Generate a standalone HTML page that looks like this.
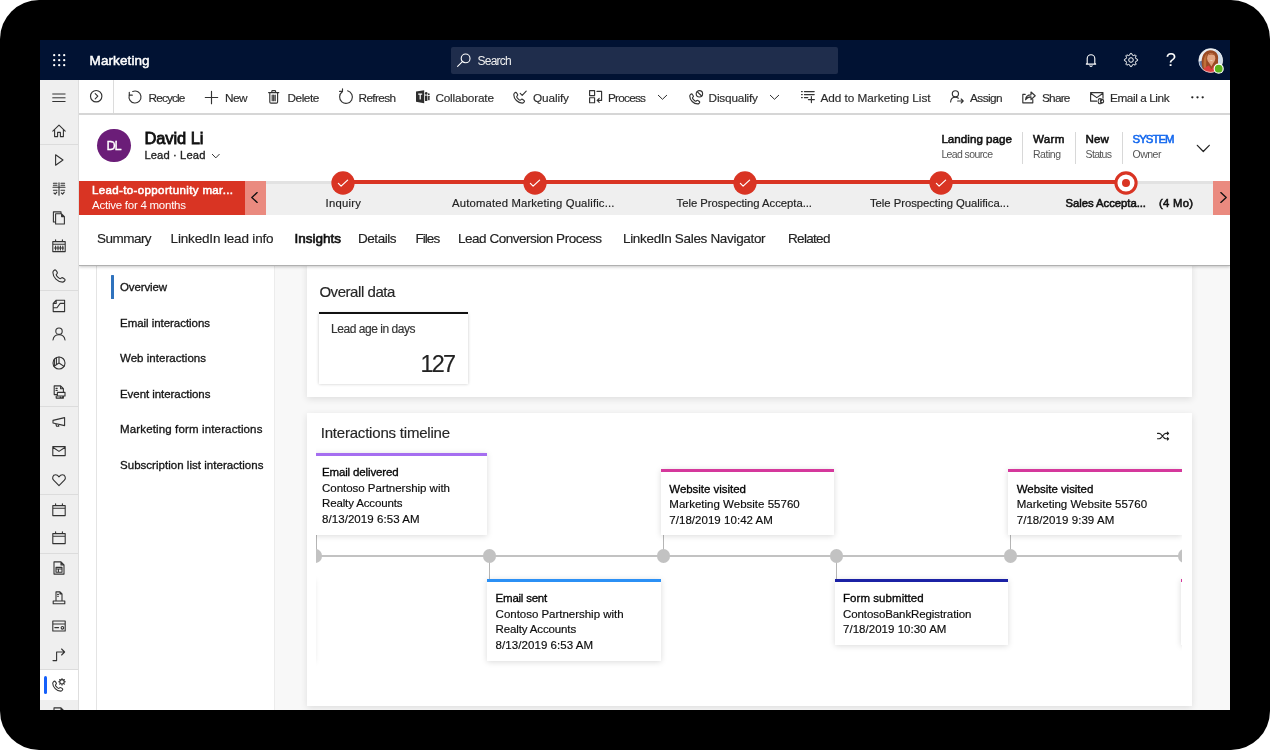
<!DOCTYPE html>
<html lang="en">
<head>
<meta charset="utf-8">
<title>Marketing - Lead: David Li</title>
<style>
*{box-sizing:border-box;margin:0;padding:0}
html,body{width:1270px;height:750px;overflow:hidden;background:#fff}
body{font-family:"Liberation Sans",sans-serif;color:#222;position:relative}
.abs{position:absolute}
.t{position:absolute;white-space:nowrap;line-height:1}
svg{overflow:visible}
#frame{position:absolute;left:0;top:0;width:1270px;height:750px;background:#000;border-radius:39px}
#screen{position:absolute;left:40px;top:40px;width:1190px;height:670px;background:#f3f3f3;overflow:hidden}
#shift{position:absolute;left:-40px;top:-40px;width:1270px;height:750px;will-change:transform}
.ic{fill:none;stroke:#333;stroke-width:1.1;stroke-linecap:round;stroke-linejoin:round}
.tile{position:absolute;background:#fff;box-shadow:0 1px 6px rgba(0,0,0,.15)}
</style>
</head>
<body>
<div id="frame"></div>
<div id="screen"><div id="shift">
<div class="abs" style="left:79px;top:265px;width:1151px;height:445px;background:#f8f8f8"></div>
<div class="abs" style="left:40px;top:40px;width:1190px;height:40px;background:#011233"></div>
<div class="abs" style="left:451px;top:47px;width:387px;height:27px;background:#1f2d4c;border-radius:2px"></div>
<svg class="abs" style="left:52.6px;top:54px;" width="13" height="13" viewBox="0 0 13 13"><rect x="0.050000000000000044" y="0.050000000000000044" width="2.3" height="2.3" rx="1.15" fill="#fff"/><rect x="0.050000000000000044" y="5.050000000000001" width="2.3" height="2.3" rx="1.15" fill="#fff"/><rect x="0.050000000000000044" y="10.049999999999999" width="2.3" height="2.3" rx="1.15" fill="#fff"/><rect x="5.050000000000001" y="0.050000000000000044" width="2.3" height="2.3" rx="1.15" fill="#fff"/><rect x="5.050000000000001" y="5.050000000000001" width="2.3" height="2.3" rx="1.15" fill="#fff"/><rect x="5.050000000000001" y="10.049999999999999" width="2.3" height="2.3" rx="1.15" fill="#fff"/><rect x="10.049999999999999" y="0.050000000000000044" width="2.3" height="2.3" rx="1.15" fill="#fff"/><rect x="10.049999999999999" y="5.050000000000001" width="2.3" height="2.3" rx="1.15" fill="#fff"/><rect x="10.049999999999999" y="10.049999999999999" width="2.3" height="2.3" rx="1.15" fill="#fff"/></svg>
<span class="t" id="t0" style="left:89.6px;top:54.47px;font-size:13.5px;-webkit-text-stroke:0.49px #fff;color:#fff;letter-spacing:0.089px;">Marketing</span>
<svg class="abs" style="left:457px;top:53px;" width="14" height="14" viewBox="0 0 14 14"><circle cx="8.6" cy="5.4" r="4.4" fill="none" stroke="#fff" stroke-width="1.1"/><path d="M5.4 8.6 L0.6 13.4" stroke="#fff" stroke-width="1.1" stroke-linecap="round"/></svg>
<span class="t" id="t1" style="left:477.6px;top:55.14px;font-size:12px;color:#f0f0f0;letter-spacing:-0.805px;">Search</span>
<svg class="abs" style="left:1085px;top:53px;" width="12" height="14" viewBox="0 0 12 14"><path d="M2.2 10.2 V5.6 a3.8 3.8 0 0 1 7.6 0 V10.2 l0.9 0.9 H1.3 Z" fill="none" stroke="#fff" stroke-width="1.1" stroke-linejoin="round"/><path d="M4.6 12.4 a1.5 1.5 0 0 0 2.8 0" fill="none" stroke="#fff" stroke-width="1.1"/></svg>
<svg class="abs" style="left:1123.6px;top:53px;" width="14" height="14" viewBox="0 0 14 14"><polygon points="13.57,6.35 13.57,7.65 11.78,8.45 11.41,9.36 12.10,11.19 11.19,12.10 9.36,11.41 8.45,11.78 7.65,13.57 6.35,13.57 5.55,11.78 4.64,11.41 2.81,12.10 1.90,11.19 2.59,9.36 2.22,8.45 0.43,7.65 0.43,6.35 2.22,5.55 2.59,4.64 1.90,2.81 2.81,1.90 4.64,2.59 5.55,2.22 6.35,0.43 7.65,0.43 8.45,2.22 9.36,2.59 11.19,1.90 12.10,2.81 11.41,4.64 11.78,5.55" fill="none" stroke="#fff" stroke-width="1" stroke-linejoin="round"/><circle cx="7" cy="7" r="2.3" fill="none" stroke="#fff" stroke-width="1"/></svg>
<span class="t" id="t2" style="left:1165.8px;top:51.24px;font-size:18.5px;color:#fff;">?</span>
<svg class="abs" style="left:1198px;top:48px;" width="26" height="26" viewBox="0 0 26 26"><defs><clipPath id="avc"><circle cx="12.7" cy="12.5" r="11.9"/></clipPath></defs>
<g clip-path="url(#avc)"><rect width="26" height="26" fill="#e9edf2"/>
<rect x="17" y="0" width="9" height="26" fill="#cfdcea"/>
<path d="M0 14 L6 12 L6 26 L0 26 Z" fill="#5f7fb5"/>
<path d="M4.5 20 C2.5 12 4 3.5 11.5 2.2 C18.5 1.5 21 7 20 12 C19.6 15.5 21 18 20.5 21 L5 23 Z" fill="#9a4a24"/>
<path d="M6 21 C5 15 5.5 8 9 5.5 C7.8 10 8.5 16 8 21 Z" fill="#c0703a"/>
<ellipse cx="13.2" cy="10.2" rx="4.1" ry="5.2" fill="#e3a684"/>
<path d="M10.2 7.2 C11.5 4.6 15.5 4.4 17.2 7.6 C15 6.4 12.4 6.2 10.2 7.2 Z" fill="#a85428"/>
<path d="M11 14.6 L13.4 18.4 L15.6 14.6 Z" fill="#dd9d7c"/>
<path d="M4 26 C5 19.5 9 18.4 11 17.6 L13.4 21.4 L15.8 17.6 C19 18.6 21.5 20 22 26 Z" fill="#dc3f3f"/>
<path d="M11.4 11.9 Q13.3 13.5 15.2 11.9 Q13.3 12.6 11.4 11.9Z" fill="#fff"/></g>
<circle cx="12.7" cy="12.5" r="11.9" fill="none" stroke="#f2f2f2" stroke-width="0.6"/>
<circle cx="20.7" cy="20.7" r="5.1" fill="#fff"/><circle cx="20.7" cy="20.7" r="3.9" fill="#5db31c"/></svg>
<div class="abs" style="left:79px;top:265px;width:195px;height:445px;background:#fff"></div>
<div class="abs" style="left:96px;top:265px;width:1px;height:445px;background:#e4e4e4"></div>
<div class="abs" style="left:274px;top:265px;width:1px;height:445px;background:#ececec"></div>
<div class="abs" style="left:110.6px;top:275.4px;width:3.2px;height:23.2px;background:#2f72bd;border-radius:0.5px"></div>
<span class="t" id="t3" style="left:120.0px;top:281.87px;font-size:11.5px;-webkit-text-stroke:0.32px #161616;color:#161616;letter-spacing:-0.133px;">Overview</span>
<span class="t" id="t4" style="left:120.0px;top:317.57px;font-size:11.5px;-webkit-text-stroke:0.32px #161616;color:#161616;letter-spacing:-0.045px;">Email interactions</span>
<span class="t" id="t5" style="left:120.0px;top:353.07px;font-size:11.5px;-webkit-text-stroke:0.32px #161616;color:#161616;letter-spacing:0.037px;">Web interactions</span>
<span class="t" id="t6" style="left:120.0px;top:388.57px;font-size:11.5px;-webkit-text-stroke:0.32px #161616;color:#161616;letter-spacing:-0.060px;">Event interactions</span>
<span class="t" id="t7" style="left:120.0px;top:424.07px;font-size:11.5px;-webkit-text-stroke:0.32px #161616;color:#161616;letter-spacing:0.143px;">Marketing form interactions</span>
<span class="t" id="t8" style="left:120.0px;top:459.77px;font-size:11.5px;-webkit-text-stroke:0.32px #161616;color:#161616;letter-spacing:0.030px;">Subscription list interactions</span>
<div class="abs" style="left:307px;top:262px;width:885px;height:134.5px;background:#fff;box-shadow:0 2px 7px rgba(0,0,0,.11)"></div>
<span class="t" id="t9" style="left:319.4px;top:284.00px;font-size:15px;-webkit-text-stroke:0.16px #262626;color:#262626;letter-spacing:-0.444px;">Overall data</span>
<div class="abs" style="left:319px;top:313px;width:149.4px;height:71px;background:#fff;box-shadow:0 0 3px rgba(0,0,0,.22)"></div>
<div class="abs" style="left:319px;top:312.4px;width:149.4px;height:2.1px;background:#111"></div>
<span class="t" id="t10" style="left:331.0px;top:323.34px;font-size:12px;-webkit-text-stroke:0.16px #333;color:#333;letter-spacing:-0.454px;">Lead age in days</span>
<span class="t" id="t11" style="left:420.4px;top:352.89px;font-size:23.4px;-webkit-text-stroke:0.16px #222;color:#222;letter-spacing:-1.719px;">127</span>
<div class="abs" style="left:307px;top:413px;width:885px;height:293px;background:#fff;box-shadow:0 2px 7px rgba(0,0,0,.11)"></div>
<span class="t" id="t12" style="left:320.7px;top:425.20px;font-size:15px;-webkit-text-stroke:0.16px #262626;color:#262626;letter-spacing:-0.200px;">Interactions timeline</span>
<svg class="abs" style="left:1157.2px;top:432px;" width="12.6" height="10" viewBox="0 0 12.6 10"><g class="ic" style="stroke:#222"><path d="M0.5 1.4 H2.2 C4.8 1.4 6.2 6.8 8.8 6.8 H11.6 M0.5 6.8 H2.2 C4.8 6.8 6.2 1.4 8.8 1.4 H11.6 M10.4 0.2 L11.6 1.4 L10.4 2.6 M10.4 5.6 L11.6 6.8 L10.4 8"/></g></svg>
<div class="abs" style="left:316px;top:445px;width:866px;height:240px;overflow:hidden"><div class="abs" style="left:-316px;top:-445px;width:1270px;height:750px">
<div class="abs" style="left:300px;top:554.8px;width:900px;height:2.5px;background:#c2c2c2"></div>
<div class="abs" style="left:316px;top:535px;width:1px;height:21px;background:#b5b5b5"></div>
<div class="abs" style="left:309.29999999999995px;top:549.4px;width:13.2px;height:13.2px;background:#c2c2c2;border-radius:50%"></div>
<div class="abs" style="left:489.04999999999995px;top:556px;width:1px;height:24px;background:#b5b5b5"></div>
<div class="abs" style="left:482.94999999999993px;top:549.4px;width:13.2px;height:13.2px;background:#c2c2c2;border-radius:50%"></div>
<div class="abs" style="left:662.7px;top:535px;width:1px;height:21px;background:#b5b5b5"></div>
<div class="abs" style="left:656.6px;top:549.4px;width:13.2px;height:13.2px;background:#c2c2c2;border-radius:50%"></div>
<div class="abs" style="left:836.35px;top:556px;width:1px;height:24px;background:#b5b5b5"></div>
<div class="abs" style="left:830.25px;top:549.4px;width:13.2px;height:13.2px;background:#c2c2c2;border-radius:50%"></div>
<div class="abs" style="left:1010.0px;top:535px;width:1px;height:21px;background:#b5b5b5"></div>
<div class="abs" style="left:1003.9px;top:549.4px;width:13.2px;height:13.2px;background:#c2c2c2;border-radius:50%"></div>
<div class="abs" style="left:1177.5500000000002px;top:549.4px;width:13.2px;height:13.2px;background:#c2c2c2;border-radius:50%"></div>
<div class="tile" style="left:140px;top:579px;width:173.7px;height:82px"><div style="height:2.6px;background:#2b90f5"></div></div>
<div class="tile" style="left:313.6px;top:453px;width:173.39999999999998px;height:82px"><div style="height:2.6px;background:#a56ef0"></div></div>
<span class="t" id="t13" style="left:322.0px;top:467.37px;font-size:11.5px;-webkit-text-stroke:0.32px #050505;color:#050505;letter-spacing:-0.144px;">Email delivered</span>
<span class="t" id="t14" style="left:322.0px;top:482.92px;font-size:11.5px;-webkit-text-stroke:0.16px #0c0c0c;color:#0c0c0c;letter-spacing:-0.021px;">Contoso Partnership with</span>
<span class="t" id="t15" style="left:322.0px;top:498.47px;font-size:11.5px;-webkit-text-stroke:0.16px #0c0c0c;color:#0c0c0c;letter-spacing:-0.134px;">Realty Accounts</span>
<span class="t" id="t16" style="left:322.0px;top:514.02px;font-size:11.5px;-webkit-text-stroke:0.16px #0c0c0c;color:#0c0c0c;letter-spacing:0.065px;">8/13/2019 6:53 AM</span>
<div class="tile" style="left:487.2px;top:579px;width:173.39999999999998px;height:82px"><div style="height:2.6px;background:#2b90f5"></div></div>
<span class="t" id="t17" style="left:495.6px;top:593.37px;font-size:11.5px;-webkit-text-stroke:0.32px #050505;color:#050505;letter-spacing:-0.233px;">Email sent</span>
<span class="t" id="t18" style="left:495.6px;top:608.92px;font-size:11.5px;-webkit-text-stroke:0.16px #0c0c0c;color:#0c0c0c;letter-spacing:-0.021px;">Contoso Partnership with</span>
<span class="t" id="t19" style="left:495.6px;top:624.47px;font-size:11.5px;-webkit-text-stroke:0.16px #0c0c0c;color:#0c0c0c;letter-spacing:-0.134px;">Realty Accounts</span>
<span class="t" id="t20" style="left:495.6px;top:640.02px;font-size:11.5px;-webkit-text-stroke:0.16px #0c0c0c;color:#0c0c0c;letter-spacing:0.065px;">8/13/2019 6:53 AM</span>
<div class="tile" style="left:660.9px;top:469.4px;width:173.39999999999998px;height:66px"><div style="height:2.6px;background:#d5389c"></div></div>
<span class="t" id="t21" style="left:669.3px;top:483.77px;font-size:11.5px;-webkit-text-stroke:0.32px #050505;color:#050505;letter-spacing:-0.038px;">Website visited</span>
<span class="t" id="t22" style="left:669.3px;top:499.32px;font-size:11.5px;-webkit-text-stroke:0.16px #0c0c0c;color:#0c0c0c;letter-spacing:0.009px;">Marketing Website 55760</span>
<span class="t" id="t23" style="left:669.3px;top:514.87px;font-size:11.5px;-webkit-text-stroke:0.16px #0c0c0c;color:#0c0c0c;letter-spacing:0.038px;">7/18/2019 10:42 AM</span>
<div class="tile" style="left:834.6px;top:579px;width:173.39999999999998px;height:66px"><div style="height:2.6px;background:#1b21a5"></div></div>
<span class="t" id="t24" style="left:843.0px;top:593.37px;font-size:11.5px;-webkit-text-stroke:0.32px #050505;color:#050505;letter-spacing:0.054px;">Form submitted</span>
<span class="t" id="t25" style="left:843.0px;top:608.92px;font-size:11.5px;-webkit-text-stroke:0.16px #0c0c0c;color:#0c0c0c;letter-spacing:-0.091px;">ContosoBankRegistration</span>
<span class="t" id="t26" style="left:843.0px;top:624.47px;font-size:11.5px;-webkit-text-stroke:0.16px #0c0c0c;color:#0c0c0c;letter-spacing:0.027px;">7/18/2019 10:30 AM</span>
<div class="tile" style="left:1008.3px;top:469.4px;width:173.39999999999998px;height:66px"><div style="height:2.6px;background:#d5389c"></div></div>
<span class="t" id="t27" style="left:1016.7px;top:483.77px;font-size:11.5px;-webkit-text-stroke:0.32px #050505;color:#050505;letter-spacing:-0.038px;">Website visited</span>
<span class="t" id="t28" style="left:1016.7px;top:499.32px;font-size:11.5px;-webkit-text-stroke:0.16px #0c0c0c;color:#0c0c0c;letter-spacing:0.009px;">Marketing Website 55760</span>
<span class="t" id="t29" style="left:1016.7px;top:514.87px;font-size:11.5px;-webkit-text-stroke:0.16px #0c0c0c;color:#0c0c0c;letter-spacing:0.065px;">7/18/2019 9:39 AM</span>
<div class="tile" style="left:1181.2px;top:579px;width:173.7px;height:66px"><div style="height:2.6px;background:#d5389c"></div></div>
</div></div>
<div class="abs" style="left:40px;top:80px;width:39px;height:630px;background:#efefef"></div>
<div class="abs" style="left:78px;top:80px;width:1px;height:630px;background:#dedede"></div>
<div class="abs" style="left:40px;top:144px;width:38px;height:1px;background:#dcdcdc"></div>
<div class="abs" style="left:40px;top:290px;width:38px;height:1px;background:#dcdcdc"></div>
<div class="abs" style="left:40px;top:406px;width:38px;height:1px;background:#dcdcdc"></div>
<div class="abs" style="left:40px;top:494px;width:38px;height:1px;background:#dcdcdc"></div>
<div class="abs" style="left:40px;top:553px;width:38px;height:1px;background:#dcdcdc"></div>
<div class="abs" style="left:40px;top:669px;width:38px;height:1px;background:#dcdcdc"></div>
<div class="abs" style="left:40px;top:669.5px;width:38px;height:30px;background:#fff"></div>
<div class="abs" style="left:44px;top:676px;width:3px;height:17.5px;background:#1560fa;border-radius:1.5px"></div>
<svg class="abs" style="left:52px;top:93px;" width="14" height="10" viewBox="0 0 14 10"><path d="M0.3 1 H13.5 M0.3 4.8 H13.5 M0.3 8.5 H13.5" fill="none" stroke="#333" stroke-width="1"/></svg>
<svg class="abs" style="left:52.0px;top:124.0px;" width="14" height="14" viewBox="0 0 14 14"><g class="ic"><path d="M0.8 7.2 L7 1.2 L13.2 7.2 M2.6 5.8 V12.6 H5.6 V8.4 H8.4 V12.6 H11.4 V5.8"/></g></svg>
<svg class="abs" style="left:52.0px;top:153.0px;" width="14" height="14" viewBox="0 0 14 14"><g class="ic"><path d="M3.6 1.8 L11 7 L3.6 12.2 Z"/></g></svg>
<svg class="abs" style="left:52.0px;top:181.6px;" width="14" height="14" viewBox="0 0 14 14"><g class="ic"><path d="M7 0.8 V13.2 M1 5.2 H13 M1.4 1.2 H5 M1.4 3.2 H5 M9 1.2 H12.6 M9 3.2 H12.6 M1.4 8.2 H5 M9 8.2 H12.6 M2 11 l1.2 1.2 l1.6 -2 M9.4 11 l1.2 1.2 l1.6 -2"/></g></svg>
<svg class="abs" style="left:52.0px;top:210.6px;" width="14" height="14" viewBox="0 0 14 14"><g class="ic"><path d="M3.6 2.8 H9.6 L12.4 5.6 V13 H3.6 Z M9.6 2.8 V5.6 H12.4 M3.6 11 H1.4 V0.9 H9 V2.8"/></g></svg>
<svg class="abs" style="left:52.0px;top:239.4px;" width="14" height="14" viewBox="0 0 14 14"><g class="ic"><path d="M0.8 2.6 H13.2 V12.6 H0.8 Z M0.8 5.2 H13.2 M3.6 0.8 V2.6 M10.4 0.8 V2.6 M3.6 7 V11 M6 7 V11 M8.4 7 V11 M10.8 7 V11 M2.4 9 H11.6"/></g></svg>
<svg class="abs" style="left:52.0px;top:269.0px;" width="14" height="14" viewBox="0 0 14 14"><g class="ic"><path d="M3.2 0.9 C2.4 0.9 0.9 2.1 0.9 3.5 C0.9 8.3 5.7 13.1 10.5 13.1 C11.9 13.1 13.1 11.6 13.1 10.8 C13.1 10.2 10.7 8.6 10.1 8.6 C9.5 8.6 8.8 9.8 8.2 9.8 C7.2 9.8 4.2 6.8 4.2 5.8 C4.2 5.2 5.4 4.5 5.4 3.9 C5.4 3.3 3.8 0.9 3.2 0.9 Z"/></g></svg>
<svg class="abs" style="left:52.0px;top:298.6px;" width="14" height="14" viewBox="0 0 14 14"><g class="ic"><path d="M1.2 4.4 L4.2 1.2 H12.6 V12.6 H1.2 Z M1.2 8.8 H5 L8.2 4.4 H12.6 M4.2 1.2 V4.4 H1.2" /></g></svg>
<svg class="abs" style="left:52.0px;top:327.4px;" width="14" height="14" viewBox="0 0 14 14"><g class="ic"><circle cx="7" cy="4.2" r="3.2"/><path d="M1 13 C1.4 9.4 4 7.8 7 7.8 C10 7.8 12.6 9.4 13 13"/></g></svg>
<svg class="abs" style="left:52.0px;top:356.0px;" width="14" height="14" viewBox="0 0 14 14"><g class="ic"><circle cx="7" cy="7" r="6"/><path d="M7 1 V7 L12 10.4 M7 7 L2 10.2 M4.4 1.8 V8.4 M2.4 3.4 V9.8" /></g></svg>
<svg class="abs" style="left:52.0px;top:385.4px;" width="14" height="14" viewBox="0 0 14 14"><g class="ic"><path d="M2.2 9.6 V0.9 H8.6 L11.4 3.7 V6.4 M8.6 0.9 V3.7 H11.4 M4 3.4 H5.2 M4 5.4 H5.2 M5.4 7.4 H13 V11 H5.4 Z M2.2 9.6 H5.4 M4.2 11 V13.1 H11.4 V11 M8.2 12.2 l1.2 0.9 l1.2 -0.9"/></g></svg>
<svg class="abs" style="left:52.0px;top:415.4px;" width="14" height="14" viewBox="0 0 14 14"><g class="ic"><path d="M1 5.4 L12.6 2.6 V10.6 L1 8 Z M3.6 8.6 L4.6 11.2 H6.8 L6.2 9.2"/></g></svg>
<svg class="abs" style="left:52.0px;top:443.6px;" width="14" height="14" viewBox="0 0 14 14"><g class="ic"><path d="M0.8 2.6 H13.2 V11.6 H0.8 Z M0.8 3.2 L7 7.4 L13.2 3.2"/></g></svg>
<svg class="abs" style="left:52.0px;top:472.6px;" width="14" height="14" viewBox="0 0 14 14"><g class="ic"><path d="M7 12.6 L1.6 7.2 C-0.2 5.4 0.6 1.8 3.6 1.8 C5.4 1.8 6.4 3 7 3.8 C7.6 3 8.6 1.8 10.4 1.8 C13.4 1.8 14.2 5.4 12.4 7.2 Z"/></g></svg>
<svg class="abs" style="left:52.0px;top:502.6px;" width="14" height="14" viewBox="0 0 14 14"><g class="ic"><path d="M0.8 2.6 H13.2 V12.6 H0.8 Z M0.8 5.2 H13.2 M3.6 0.8 V2.6 M10.4 0.8 V2.6"/></g></svg>
<svg class="abs" style="left:52.0px;top:531.4px;" width="14" height="14" viewBox="0 0 14 14"><g class="ic"><path d="M0.8 2.6 H13.2 V12.6 H0.8 Z M0.8 5.2 H13.2 M3.6 0.8 V2.6 M10.4 0.8 V2.6"/></g></svg>
<svg class="abs" style="left:52.0px;top:561.0px;" width="14" height="14" viewBox="0 0 14 14"><g class="ic"><path d="M2 0.9 H9 L12 3.9 V13.1 H2 Z M9 0.9 V3.9 H12 M4 6.4 H10 V11.2 H4 Z M4 8 H10 M6.4 8 V11.2"/></g></svg>
<svg class="abs" style="left:52.0px;top:590.6px;" width="14" height="14" viewBox="0 0 14 14"><g class="ic"><path d="M4 10 V0.9 H8 L10 2.9 V10 M8 0.9 V2.9 H10 M1.2 10 H12.8 V12.8 H1.2 Z M5.6 3.4 H6.4 M5.6 5.2 H6.4"/></g></svg>
<svg class="abs" style="left:52.0px;top:619.4px;" width="14" height="14" viewBox="0 0 14 14"><g class="ic"><path d="M0.8 2 H13.2 V12 H0.8 Z M0.8 5 H13.2 M2.8 8.6 H6.6"/><circle cx="10.4" cy="8.8" r="1.3"/></g></svg>
<svg class="abs" style="left:52.0px;top:648.4px;" width="14" height="14" viewBox="0 0 14 14"><g class="ic"><path d="M1 12.6 H4.6 V4 H12.6 M9.6 1 L12.6 4 L9.6 7"/></g></svg>
<svg class="abs" style="left:52.0px;top:678.0px;" width="14" height="14" viewBox="0 0 14 14"><g class="ic"><g transform="translate(0,2.4) scale(0.82)"><path d="M3.2 0.9 C2.4 0.9 0.9 2.1 0.9 3.5 C0.9 8.3 5.7 13.1 10.5 13.1 C11.9 13.1 13.1 11.6 13.1 10.8 C13.1 10.2 10.7 8.6 10.1 8.6 C9.5 8.6 8.8 9.8 8.2 9.8 C7.2 9.8 4.2 6.8 4.2 5.8 C4.2 5.2 5.4 4.5 5.4 3.9 C5.4 3.3 3.8 0.9 3.2 0.9 Z" vector-effect="non-scaling-stroke"/></g><circle cx="10" cy="3.8" r="2.2"/><path d="M10 0.5 V1.3 M10 6.3 V7.1 M6.7 3.8 H7.5 M12.5 3.8 H13.3 M7.7 1.5 l0.55 0.55 M11.75 5.55 l0.55 0.55 M12.3 1.5 l-0.55 0.55 M8.25 5.55 l-0.55 0.55"/></g></svg>
<svg class="abs" style="left:52.0px;top:707.4px;" width="14" height="14" viewBox="0 0 14 14"><g class="ic"><path d="M2 0.9 H9 L12 3.9 V13.1 H2 Z M9 0.9 V3.9 H12"/></g></svg>
<div class="abs" style="left:79px;top:80px;width:1151px;height:34px;background:#fff"></div>
<div class="abs" style="left:79px;top:113px;width:1151px;height:1.5px;background:#d6d6d6"></div>
<div class="abs" style="left:113px;top:80px;width:1px;height:33px;background:#dcdcdc"></div>
<svg class="abs" style="left:90px;top:90.2px;" width="12.4" height="12.4" viewBox="0 0 12.4 12.4"><g class="ic" style="stroke-width:1.15"><circle cx="6.2" cy="6.2" r="5.7"/><path d="M5.2 3.6 L7.8 6.2 L5.2 8.8"/></g></svg>
<svg class="abs" style="left:128.4px;top:89.7px;" width="14" height="14" viewBox="0 0 14 14"><g class="ic" style="stroke-width:1.15"><path d="M4.75 1.44 A6 6 0 1 1 1.29 5.15"/><path d="M1.29 2.2 V5.15 H4.3"/></g></svg>
<span class="t" id="t30" style="left:148.6px;top:92.61px;font-size:11.8px;-webkit-text-stroke:0.16px #2b2b2b;color:#2b2b2b;letter-spacing:-0.861px;">Recycle</span>
<svg class="abs" style="left:205.4px;top:90.5px;" width="13" height="13" viewBox="0 0 13 13"><g class="ic" style="stroke-width:1.15"><path d="M6.5 0.3 V12.7 M0.3 6.5 H12.7"/></g></svg>
<span class="t" id="t31" style="left:225.0px;top:92.61px;font-size:11.8px;-webkit-text-stroke:0.16px #2b2b2b;color:#2b2b2b;letter-spacing:-0.504px;">New</span>
<svg class="abs" style="left:268px;top:90px;" width="11.4" height="14" viewBox="0 0 11.4 14"><g class="ic" style="stroke-width:1.15"><path d="M0.6 2.6 H10.8 M3.8 2.6 V1.4 Q3.8 0.6 4.6 0.6 H6.8 Q7.6 0.6 7.6 1.4 V2.6 M1.8 2.6 V12 Q1.8 13.2 3 13.2 H8.4 Q9.6 13.2 9.6 12 V2.6 M4.2 5 V10.8 M5.7 5 V10.8 M7.2 5 V10.8"/></g></svg>
<span class="t" id="t32" style="left:287.4px;top:92.61px;font-size:11.8px;-webkit-text-stroke:0.16px #2b2b2b;color:#2b2b2b;letter-spacing:-0.422px;">Delete</span>
<svg class="abs" style="left:339px;top:89.7px;" width="14" height="14" viewBox="0 0 14 14"><g class="ic" style="stroke-width:1.15"><path d="M8.6 0.8 A6.4 6.4 0 1 1 3.3 1.8"/><path d="M0.6 1.4 H3.5 V-1.2"/></g></svg>
<span class="t" id="t33" style="left:358.6px;top:92.61px;font-size:11.8px;-webkit-text-stroke:0.16px #2b2b2b;color:#2b2b2b;letter-spacing:-0.652px;">Refresh</span>
<svg class="abs" style="left:416px;top:90.2px;" width="14" height="13.4" viewBox="0 0 14 13.4"><path d="M0 1.6 L8.2 0.2 V13.2 L0 11.8 Z" fill="#2e2e2e"/><path d="M2.2 4.2 H6.2 M4.2 4.2 V9.6" stroke="#fff" stroke-width="1.2" fill="none"/><circle cx="10.2" cy="3.4" r="1.3" fill="#2e2e2e"/><rect x="9" y="5.4" width="2.4" height="5.6" rx="0.6" fill="#2e2e2e"/><circle cx="12.8" cy="4.2" r="0.9" fill="#2e2e2e"/><rect x="12.1" y="5.8" width="1.5" height="4.4" rx="0.5" fill="#2e2e2e"/></svg>
<span class="t" id="t34" style="left:435.4px;top:92.61px;font-size:11.8px;-webkit-text-stroke:0.16px #2b2b2b;color:#2b2b2b;letter-spacing:-0.174px;">Collaborate</span>
<svg class="abs" style="left:513.4px;top:90.4px;" width="14" height="14" viewBox="0 0 14 14"><g class="ic" style="stroke-width:1.15"><g transform="translate(0,1.6) scale(0.88)"><path d="M3.2 0.9 C2.4 0.9 0.9 2.1 0.9 3.5 C0.9 8.3 5.7 13.1 10.5 13.1 C11.9 13.1 13.1 11.6 13.1 10.8 C13.1 10.2 10.7 8.6 10.1 8.6 C9.5 8.6 8.8 9.8 8.2 9.8 C7.2 9.8 4.2 6.8 4.2 5.8 C4.2 5.2 5.4 4.5 5.4 3.9 C5.4 3.3 3.8 0.9 3.2 0.9 Z" vector-effect="non-scaling-stroke"/></g><path d="M7.2 3.4 L9.2 5.4 L13.2 1.2"/></g></svg>
<span class="t" id="t35" style="left:533.0px;top:92.61px;font-size:11.8px;-webkit-text-stroke:0.16px #2b2b2b;color:#2b2b2b;letter-spacing:-0.122px;">Qualify</span>
<svg class="abs" style="left:589.2px;top:90.4px;" width="13.4" height="13.4" viewBox="0 0 13.4 13.4"><g class="ic" style="stroke-width:1.15"><path d="M0.6 0.6 H5.6 V5.6 H0.6 Z M0.6 7.8 H5.6 V12.8 H0.6 Z M8 1.4 H12.6 V10.4 H8.2 M10.2 8.4 L8.2 10.4 L10.2 12.4"/></g></svg>
<span class="t" id="t36" style="left:608.0px;top:92.61px;font-size:11.8px;-webkit-text-stroke:0.16px #2b2b2b;color:#2b2b2b;letter-spacing:-0.769px;">Process</span>
<svg class="abs" style="left:658.4px;top:94.6px;" width="9" height="4.6" viewBox="0 0 9 4.6"><path d="M0.3 0.3 L4.5 4.3 L8.7 0.3" fill="none" stroke="#2b2b2b" stroke-width="1" stroke-linecap="round" stroke-linejoin="round"/></svg>
<svg class="abs" style="left:689px;top:89.8px;" width="14.4" height="14.4" viewBox="0 0 14.4 14.4"><g class="ic" style="stroke-width:1.15"><g transform="translate(0,3.2) scale(0.82)"><path d="M3.2 0.9 C2.4 0.9 0.9 2.1 0.9 3.5 C0.9 8.3 5.7 13.1 10.5 13.1 C11.9 13.1 13.1 11.6 13.1 10.8 C13.1 10.2 10.7 8.6 10.1 8.6 C9.5 8.6 8.8 9.8 8.2 9.8 C7.2 9.8 4.2 6.8 4.2 5.8 C4.2 5.2 5.4 4.5 5.4 3.9 C5.4 3.3 3.8 0.9 3.2 0.9 Z" vector-effect="non-scaling-stroke"/></g><circle cx="10.4" cy="3.8" r="3.2"/><path d="M8.2 1.6 L12.6 6"/></g></svg>
<span class="t" id="t37" style="left:708.6px;top:92.61px;font-size:11.8px;-webkit-text-stroke:0.16px #2b2b2b;color:#2b2b2b;letter-spacing:-0.195px;">Disqualify</span>
<svg class="abs" style="left:770.2px;top:94.6px;" width="9" height="4.6" viewBox="0 0 9 4.6"><path d="M0.3 0.3 L4.5 4.3 L8.7 0.3" fill="none" stroke="#2b2b2b" stroke-width="1" stroke-linecap="round" stroke-linejoin="round"/></svg>
<svg class="abs" style="left:801.2px;top:91.4px;" width="14" height="12" viewBox="0 0 14 12"><g class="ic" style="stroke-width:1.15"><path d="M0.5 0.6 H1.3 M3.4 0.6 H13.2 M0.5 3.6 H1.3 M3.4 3.6 H13.2 M0.5 6.6 H1.3 M3.4 6.6 H6.8 M10.4 5.6 V11.6 M7.4 8.6 H13.4"/></g></svg>
<span class="t" id="t38" style="left:820.4px;top:92.61px;font-size:11.8px;-webkit-text-stroke:0.16px #2b2b2b;color:#2b2b2b;letter-spacing:-0.032px;">Add to Marketing List</span>
<svg class="abs" style="left:950.4px;top:90.4px;" width="14" height="14" viewBox="0 0 14 14"><g class="ic" style="stroke-width:1.15"><circle cx="5.4" cy="3.8" r="3.1"/><path d="M0.6 12 C0.8 9 2.8 7.2 5.4 7.2 C6.6 7.2 7.6 7.6 8.4 8.2 M7.6 11 H13.2 M11.2 9 L13.2 11 L11.2 13"/></g></svg>
<span class="t" id="t39" style="left:970.0px;top:92.61px;font-size:11.8px;-webkit-text-stroke:0.16px #2b2b2b;color:#2b2b2b;letter-spacing:-0.563px;">Assign</span>
<svg class="abs" style="left:1022.4px;top:90.2px;" width="14" height="14" viewBox="0 0 14 14"><g class="ic" style="stroke-width:1.15"><path d="M3.2 4.4 H0.8 V12.8 H10.8 V9.6 M3.6 9.8 C3.8 6.6 6 4.8 9 4.8 V2 L13.2 5.8 L9 9.6 V6.8 C6.6 6.8 4.8 7.6 3.6 9.8 Z"/></g></svg>
<span class="t" id="t40" style="left:1042.0px;top:92.61px;font-size:11.8px;-webkit-text-stroke:0.16px #2b2b2b;color:#2b2b2b;letter-spacing:-0.770px;">Share</span>
<svg class="abs" style="left:1090px;top:92.4px;" width="14.4" height="12.4" viewBox="0 0 14.4 12.4"><g class="ic" style="stroke-width:1.15"><path d="M7 9.2 H0.6 V0.6 H13 V6.2 M0.6 1.2 L6.8 5.6 L13 1.2"/><path d="M8.4 8.2 a1.6 1.6 0 0 1 3.2 0 V8.6 M11.6 10.2 a1.6 1.6 0 0 1 -3.2 0 V9.8 M13.6 9 a1.6 1.6 0 0 0 -3.2 0 M10.4 9.4 a1.6 1.6 0 0 0 3.2 0"/></g></svg>
<span class="t" id="t41" style="left:1110.0px;top:92.61px;font-size:11.8px;-webkit-text-stroke:0.16px #2b2b2b;color:#2b2b2b;letter-spacing:-0.424px;">Email a Link</span>
<svg class="abs" style="left:1191.2px;top:96.4px;" width="13" height="2.6" viewBox="0 0 13 2.6"><circle cx="1.3" cy="1.3" r="1.15" fill="#222"/><circle cx="6.5" cy="1.3" r="1.15" fill="#222"/><circle cx="11.7" cy="1.3" r="1.15" fill="#222"/></svg>
<div class="abs" style="left:79px;top:114.5px;width:1151px;height:66.5px;background:#fff"></div>
<div class="abs" style="left:97.2px;top:128.8px;width:33.7px;height:33.7px;background:#6b1d78;border-radius:50%"></div>
<span class="t" id="t42" style="left:106.5px;top:140.06px;font-size:12.8px;-webkit-text-stroke:0.32px #fff;color:#fff;letter-spacing:-1.263px;">DL</span>
<span class="t" id="t43" style="left:144.4px;top:129.63px;font-size:16.5px;-webkit-text-stroke:0.79px #111;color:#111;letter-spacing:-0.089px;">David Li</span>
<span class="t" id="t44" style="left:144.4px;top:150.42px;font-size:11.2px;-webkit-text-stroke:0.32px #222;color:#222;letter-spacing:0.127px;">Lead · Lead</span>
<svg class="abs" style="left:211.5px;top:154.2px;" width="7.6" height="4.2" viewBox="0 0 7.6 4.2"><path d="M0.3 0.3 L3.8 3.9000000000000004 L7.3 0.3" fill="none" stroke="#333" stroke-width="1" stroke-linecap="round" stroke-linejoin="round"/></svg>
<span class="t" id="t45" style="left:941.4px;top:133.38px;font-size:11.6px;-webkit-text-stroke:0.56px #111;color:#111;letter-spacing:0.029px;">Landing page</span>
<span class="t" id="t46" style="left:941.4px;top:149.41px;font-size:10.5px;color:#555;letter-spacing:-0.620px;">Lead source</span>
<div class="abs" style="left:1022px;top:132.4px;width:1px;height:31.6px;background:#d8d8d8"></div>
<span class="t" id="t47" style="left:1033.0px;top:133.38px;font-size:11.6px;-webkit-text-stroke:0.56px #111;color:#111;letter-spacing:0.306px;">Warm</span>
<span class="t" id="t48" style="left:1033.0px;top:149.41px;font-size:10.5px;color:#555;letter-spacing:-0.473px;">Rating</span>
<div class="abs" style="left:1075px;top:132.4px;width:1px;height:31.6px;background:#d8d8d8"></div>
<span class="t" id="t49" style="left:1085.6px;top:133.38px;font-size:11.6px;-webkit-text-stroke:0.56px #111;color:#111;letter-spacing:0.098px;">New</span>
<span class="t" id="t50" style="left:1085.6px;top:149.41px;font-size:10.5px;color:#555;letter-spacing:-0.675px;">Status</span>
<div class="abs" style="left:1122px;top:132.4px;width:1px;height:31.6px;background:#d8d8d8"></div>
<span class="t" id="t51" style="left:1132.6px;top:133.55px;font-size:11.4px;-webkit-text-stroke:0.55px #1267ee;color:#1267ee;letter-spacing:-0.969px;">SYSTEM</span>
<span class="t" id="t52" style="left:1132.6px;top:149.41px;font-size:10.5px;color:#555;letter-spacing:-0.534px;">Owner</span>
<svg class="abs" style="left:1197px;top:144.6px;" width="12.6" height="6.8" viewBox="0 0 12.6 6.8"><path d="M0.3 0.3 L6.3 6.5 L12.299999999999999 0.3" fill="none" stroke="#222" stroke-width="1.2" stroke-linecap="round" stroke-linejoin="round"/></svg>
<div class="abs" style="left:79px;top:180.5px;width:1151px;height:34.5px;background:#efefef"></div>
<div class="abs" style="left:265.6px;top:180.5px;width:947.4px;height:3.3px;background:#e2e2e2"></div>
<div class="abs" style="left:79px;top:180.5px;width:166px;height:34.3px;background:#d93423"></div>
<div class="abs" style="left:245px;top:180.5px;width:20.6px;height:34.3px;background:#ea8a7f"></div>
<div class="abs" style="left:1213px;top:180.5px;width:17px;height:34.3px;background:#ea8a7f"></div>
<svg class="abs" style="left:251.4px;top:192.0px;" width="7" height="11" viewBox="0 0 7 11"><path d="M6.2 0.6 L0.8 5.5 L6.2 10.4" fill="none" stroke="#111" stroke-width="1.35" stroke-linecap="round" stroke-linejoin="round"/></svg>
<svg class="abs" style="left:1219.6px;top:192.0px;" width="7" height="11" viewBox="0 0 7 11"><path d="M0.8 0.6 L6.2 5.5 L0.8 10.4" fill="none" stroke="#111" stroke-width="1.35" stroke-linecap="round" stroke-linejoin="round"/></svg>
<span class="t" id="t53" style="left:92.0px;top:184.77px;font-size:11.5px;-webkit-text-stroke:0.55px #fff;color:#fff;letter-spacing:0.373px;">Lead-to-opportunity mar...</span>
<span class="t" id="t54" style="left:92.0px;top:200.17px;font-size:11.5px;color:#fff;letter-spacing:-0.246px;">Active for 4 months</span>
<div class="abs" style="left:343px;top:180px;width:783px;height:4px;background:#d93423"></div>
<svg class="abs" style="left:331.2px;top:170.8px;" width="24" height="24" viewBox="0 0 24 24"><circle cx="12" cy="12" r="11.65" fill="#d93423"/><path d="M7.4 12.4 L10.1 15.1 L16.6 9.1" fill="none" stroke="#fff" stroke-width="1.25" stroke-linecap="round" stroke-linejoin="round"/></svg>
<svg class="abs" style="left:523.2px;top:170.8px;" width="24" height="24" viewBox="0 0 24 24"><circle cx="12" cy="12" r="11.65" fill="#d93423"/><path d="M7.4 12.4 L10.1 15.1 L16.6 9.1" fill="none" stroke="#fff" stroke-width="1.25" stroke-linecap="round" stroke-linejoin="round"/></svg>
<svg class="abs" style="left:733.2px;top:170.8px;" width="24" height="24" viewBox="0 0 24 24"><circle cx="12" cy="12" r="11.65" fill="#d93423"/><path d="M7.4 12.4 L10.1 15.1 L16.6 9.1" fill="none" stroke="#fff" stroke-width="1.25" stroke-linecap="round" stroke-linejoin="round"/></svg>
<svg class="abs" style="left:929.2px;top:170.8px;" width="24" height="24" viewBox="0 0 24 24"><circle cx="12" cy="12" r="11.65" fill="#d93423"/><path d="M7.4 12.4 L10.1 15.1 L16.6 9.1" fill="none" stroke="#fff" stroke-width="1.25" stroke-linecap="round" stroke-linejoin="round"/></svg>
<svg class="abs" style="left:1114.2px;top:170.8px;" width="24" height="24" viewBox="0 0 24 24"><circle cx="12" cy="12" r="10.1" fill="#fff" stroke="#d93423" stroke-width="3.1"/><circle cx="12" cy="12" r="4" fill="#d93423"/></svg>
<span class="t" id="t55" style="left:325.6px;top:198.03px;font-size:11.3px;-webkit-text-stroke:0.16px #222;color:#222;letter-spacing:0.247px;">Inquiry</span>
<span class="t" id="t56" style="left:452.0px;top:198.03px;font-size:11.3px;-webkit-text-stroke:0.16px #222;color:#222;letter-spacing:0.160px;">Automated Marketing Qualific...</span>
<span class="t" id="t57" style="left:676.6px;top:198.03px;font-size:11.3px;-webkit-text-stroke:0.16px #222;color:#222;letter-spacing:-0.034px;">Tele Prospecting Accepta...</span>
<span class="t" id="t58" style="left:870.0px;top:198.03px;font-size:11.3px;-webkit-text-stroke:0.16px #222;color:#222;letter-spacing:-0.036px;">Tele Prospecting Qualifica...</span>
<span class="t" id="t59" style="left:1065.4px;top:198.03px;font-size:11.3px;-webkit-text-stroke:0.54px #111;color:#111;letter-spacing:-0.027px;">Sales Accepta...</span>
<span class="t" id="t60" style="left:1159.0px;top:198.03px;font-size:11.3px;-webkit-text-stroke:0.54px #111;color:#111;letter-spacing:0.270px;">(4 Mo)</span>
<div class="abs" style="left:79px;top:215px;width:1151px;height:50.5px;background:#fff;border-bottom:1px solid #b0b0b0;box-shadow:0 1px 3px rgba(0,0,0,.22);clip-path:inset(0 0 -8px 0)"></div>
<span class="t" id="t61" style="left:97.0px;top:231.67px;font-size:13.5px;-webkit-text-stroke:0.16px #222;color:#222;letter-spacing:-0.526px;">Summary</span>
<span class="t" id="t62" style="left:170.6px;top:231.67px;font-size:13.5px;-webkit-text-stroke:0.16px #222;color:#222;letter-spacing:-0.167px;">LinkedIn lead info</span>
<span class="t" id="t63" style="left:294.4px;top:231.67px;font-size:13.5px;-webkit-text-stroke:0.65px #111;color:#111;letter-spacing:0.010px;">Insights</span>
<span class="t" id="t64" style="left:358.0px;top:231.67px;font-size:13.5px;-webkit-text-stroke:0.16px #222;color:#222;letter-spacing:-0.447px;">Details</span>
<span class="t" id="t65" style="left:415.4px;top:231.67px;font-size:13.5px;-webkit-text-stroke:0.16px #222;color:#222;letter-spacing:-0.926px;">Files</span>
<span class="t" id="t66" style="left:458.0px;top:231.67px;font-size:13.5px;-webkit-text-stroke:0.16px #222;color:#222;letter-spacing:-0.481px;">Lead Conversion Process</span>
<span class="t" id="t67" style="left:623.0px;top:231.67px;font-size:13.5px;-webkit-text-stroke:0.16px #222;color:#222;letter-spacing:-0.325px;">LinkedIn Sales Navigator</span>
<span class="t" id="t68" style="left:788.0px;top:231.67px;font-size:13.5px;-webkit-text-stroke:0.16px #222;color:#222;letter-spacing:-0.690px;">Related</span>
</div></div>
</body>
</html>
